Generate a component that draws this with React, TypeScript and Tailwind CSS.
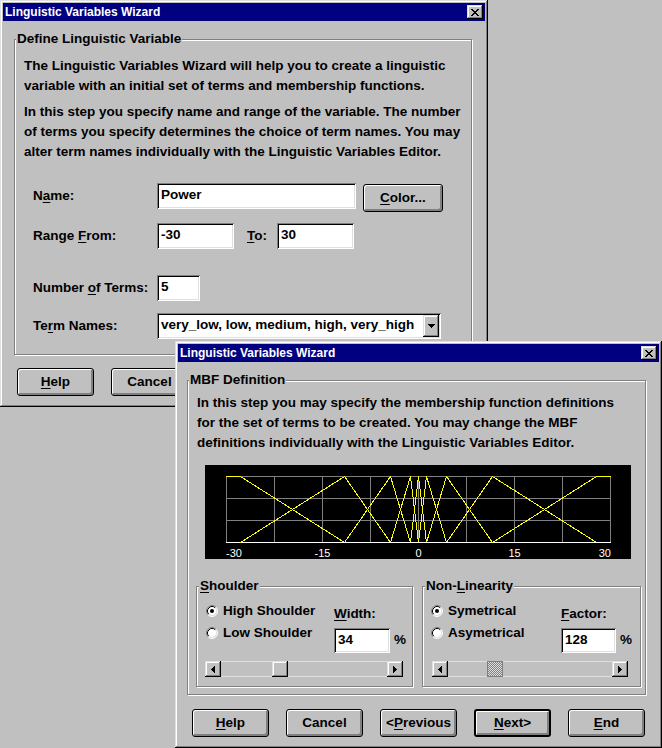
import React from "react";

const raised =
  "shadow-[inset_-1px_-1px_#000,inset_1px_1px_#dfdfdf,inset_-2px_-2px_#808080,inset_2px_2px_#fff]";
const sunken =
  "shadow-[inset_1px_1px_#808080,inset_-1px_-1px_#fff,inset_2px_2px_#000,inset_-2px_-2px_#dfdfdf]";

function U({ children }: { children: React.ReactNode }) {
  return <span className="underline decoration-1 underline-offset-[2px]">{children}</span>;
}

function XGlyph() {
  const rows = ["11000011", "01100110", "00111100", "00011000", "00111100", "01100110", "11000011"];
  return (
    <svg width="8" height="7" viewBox="0 0 8 7" shapeRendering="crispEdges">
      {rows.flatMap((r, y) =>
        r.split("").map((c, x) =>
          c === "1" ? <rect key={`${x}-${y}`} x={x} y={y} width="1" height="1" fill="#000" /> : null
        )
      )}
    </svg>
  );
}

function TitleBar() {
  return (
    <div className="h-[18px] shrink-0 bg-[#000080] flex items-center justify-between pl-[2px] pr-[2px]">
      <span className="text-white font-bold text-[12px] leading-none">Linguistic Variables Wizard</span>
      <div className={`w-[16px] h-[14px] bg-[#c0c0c0] flex items-center justify-center ${raised}`}>
        <XGlyph />
      </div>
    </div>
  );
}

function Window({ className, children }: { className: string; children: React.ReactNode }) {
  return (
    <div className={`absolute bg-[#c0c0c0] p-[3px] flex flex-col ${raised} ${className}`}>
      <TitleBar />
      {children}
    </div>
  );
}

function Group({
  label,
  className,
  labelClass,
  children,
}: {
  label: React.ReactNode;
  className: string;
  labelClass: string;
  children: React.ReactNode;
}) {
  return (
    <div
      className={`relative shrink-0 border border-[#808080] shadow-[1px_1px_0_#fff,inset_1px_1px_0_#fff] ${className}`}
    >
      <div className={`absolute -top-[9px] px-[1px] bg-[#c0c0c0] leading-[16px] ${labelClass}`}>{label}</div>
      {children}
    </div>
  );
}

function Btn({ children, def, className = "" }: { children: React.ReactNode; def?: boolean; className?: string }) {
  return (
    <div
      className={`shrink-0 h-[28px] flex items-center justify-center bg-[#c0c0c0] rounded-[3px] border-black ${
        def ? "border-2" : "border"
      } shadow-[inset_1px_1px_#fff,inset_-1px_-1px_#808080,inset_-2px_-2px_#808080] ${className}`}
    >
      <span className="whitespace-nowrap">{children}</span>
    </div>
  );
}

function Field({ children, className }: { children?: React.ReactNode; className: string }) {
  return (
    <div className={`shrink-0 bg-white flex items-center pl-[4px] pb-[1px] ${sunken} ${className}`}>
      <span>{children}</span>
    </div>
  );
}

function Label({ children }: { children: React.ReactNode }) {
  return (
    <div className="w-[124px] h-[26px] shrink-0 flex items-center">
      <span className="whitespace-nowrap">{children}</span>
    </div>
  );
}

function DownArrow() {
  return (
    <svg width="7" height="4" viewBox="0 0 7 4" shapeRendering="crispEdges">
      <path d="M0 0H7V1H6V2H5V3H4V4H3V3H2V2H1V1H0Z" fill="#000" />
    </svg>
  );
}

function SideArrow({ dir }: { dir: "left" | "right" }) {
  return (
    <svg width="4" height="7" viewBox="0 0 4 7" shapeRendering="crispEdges">
      {dir === "left" ? (
        <path d="M3 0H4V7H3V6H2V5H1V4H0V3H1V2H2V1H3Z" fill="#000" />
      ) : (
        <path d="M0 0H1V1H2V2H3V3H4V4H3V5H2V6H1V7H0Z" fill="#000" />
      )}
    </svg>
  );
}

function Scrollbar({ className, thumb, dither }: { className: string; thumb: number; dither?: boolean }) {
  return (
    <div className={`h-[16px] flex bg-[#c0c0c0] ${className}`}>
      <div className={`w-[16px] h-[16px] shrink-0 bg-[#c0c0c0] flex items-center justify-center ${raised}`}>
        <SideArrow dir="left" />
      </div>
      <div className="flex-1 flex border-y border-[#dfdfdf]">
        <div style={{ width: thumb - 16 }} className="shrink-0" />
        {dither ? (
          <div className="w-[16px] h-[16px] -mt-px shrink-0 border border-[#808080] bg-[repeating-conic-gradient(#808080_0%_25%,#dfdfdf_0%_50%)] bg-[length:2px_2px]" />
        ) : (
          <div className={`w-[16px] h-[16px] -mt-px shrink-0 bg-[#c0c0c0] ${raised}`} />
        )}
      </div>
      <div className={`w-[16px] h-[16px] shrink-0 bg-[#c0c0c0] flex items-center justify-center ${raised}`}>
        <SideArrow dir="right" />
      </div>
    </div>
  );
}

function Radio({ checked, label }: { checked?: boolean; label: string }) {
  return (
    <div className="h-[22px] flex items-center gap-[5px]">
      <svg width="12" height="12" viewBox="0 0 12 12" className="shrink-0">
        <circle cx="6" cy="6" r="5" fill="#fff" />
        <path d="M9.89 2.11A5.5 5.5 0 0 0 2.11 9.89" stroke="#808080" fill="none" />
        <path d="M2.11 9.89A5.5 5.5 0 0 0 9.89 2.11" stroke="#fff" fill="none" />
        <path d="M9.18 2.82A4.5 4.5 0 0 0 2.82 9.18" stroke="#000" fill="none" />
        <path d="M2.82 9.18A4.5 4.5 0 0 0 9.18 2.82" stroke="#dfdfdf" fill="none" />
        {checked && <circle cx="6" cy="6" r="2" fill="#000" />}
      </svg>
      <span className="leading-[16px] whitespace-nowrap">{label}</span>
    </div>
  );
}

function Chart() {
  const P = [35, 139, 185, 205, 213, 221, 241, 287, 391];
  const T = 11;
  const B = 77;
  const segs: [number, number, number, number][] = [];
  for (let i = 0; i < P.length - 1; i++) {
    segs.push([P[i], T, P[i + 1], B]);
    segs.push([P[i], B, P[i + 1], T]);
  }
  const vx = Array.from({ length: 9 }, (_, k) => 21 + 48 * k);
  return (
    <svg width="426" height="94" viewBox="0 0 426 94" className="block shrink-0 bg-black">
      {vx.map((x) => (
        <line key={`v${x}`} x1={x + 0.5} y1={T} x2={x + 0.5} y2={B} stroke="#808080" />
      ))}
      {[11, 33, 55].map((y) => (
        <line key={`h${y}`} x1={21} y1={y + 0.5} x2={406} y2={y + 0.5} stroke="#808080" />
      ))}
      <line x1={21} y1={77.5} x2={406} y2={77.5} stroke="#fff" />
      <g stroke="#ffff00" strokeWidth="1" shapeRendering="crispEdges">
        <line x1={21} y1={11.5} x2={35.5} y2={11.5} />
        <line x1={391} y1={11.5} x2={406} y2={11.5} />
        {segs.map(([a, b, c, d], i) => (
          <line key={i} x1={a + 0.5} y1={b + 0.5} x2={c + 0.5} y2={d + 0.5} />
        ))}
      </g>
      <g fill="#fff" fontSize="11" fontWeight="normal" fontFamily="'Liberation Sans', Arial, sans-serif">
        <text x={21} y={92} textAnchor="start">-30</text>
        <text x={117.5} y={92} textAnchor="middle">-15</text>
        <text x={213.5} y={92} textAnchor="middle">0</text>
        <text x={309.5} y={92} textAnchor="middle">15</text>
        <text x={406} y={92} textAnchor="end">30</text>
      </g>
    </svg>
  );
}

export default function App() {
  return (
    <div className="relative w-[662px] h-[748px] overflow-hidden bg-[#c0c0c0] font-['Liberation_Sans',Arial,sans-serif] text-black text-[13.5px] font-bold">
      <Window className="left-0 top-0 w-[488px] h-[407px]">
        <Group
          label="Define Linguistic Variable"
          labelClass="left-[1px]"
          className="ml-[11px] mt-[18px] w-[458px] h-[316px]"
        >
          <div className="pl-[9px] pt-[16px] leading-[20px] whitespace-nowrap">
            <p>
              The Linguistic Variables Wizard will help you to create a linguistic
              <br />
              variable with an initial set of terms and membership functions.
            </p>
            <p className="mt-[6px]">
              In this step you specify name and range of the variable. The number
              <br />
              of terms you specify determines the choice of term names. You may
              <br />
              alter term names individually with the Linguistic Variables Editor.
            </p>
          </div>
          <div className="pl-[18px] mt-[21px] flex flex-col">
            <div className="h-[40px] flex items-start">
              <Label>
                N<U>a</U>me:
              </Label>
              <Field className="w-[199px] h-[26px]">Power</Field>
              <Btn className="w-[80px] ml-[7px] mt-[1px]">
                <U>C</U>olor...
              </Btn>
            </div>
            <div className="h-[52px] flex items-start">
              <Label>
                Range <U>F</U>rom:
              </Label>
              <Field className="w-[77px] h-[26px]">-30</Field>
              <div className="ml-[13px] h-[26px] flex items-center">
                <span>
                  <U>T</U>o:
                </span>
              </div>
              <Field className="ml-[10px] w-[77px] h-[26px]">30</Field>
            </div>
            <div className="h-[38px] flex items-start">
              <Label>
                Number <U>o</U>f Terms:
              </Label>
              <Field className="w-[43px] h-[26px]">5</Field>
            </div>
            <div className="h-[26px] flex items-start">
              <Label>
                Te<U>r</U>m Names:
              </Label>
              <div className={`w-[284px] h-[26px] shrink-0 bg-white flex items-center p-[2px] ${sunken}`}>
                <span className="flex-1 pl-[2px] pb-[1px] whitespace-nowrap">very_low, low, medium, high, very_high</span>
                <div className={`w-[16px] h-full shrink-0 bg-[#c0c0c0] flex items-center justify-center ${raised}`}>
                  <DownArrow />
                </div>
              </div>
            </div>
          </div>
        </Group>
        <div className="flex gap-[17px] ml-[14px] mt-[13px]">
          <Btn className="w-[77px]">
            <U>H</U>elp
          </Btn>
          <Btn className="w-[77px]">Cancel</Btn>
        </div>
      </Window>

      <Window className="left-[175px] top-[341px] w-[487px] h-[407px]">
        <Group label="MBF Definition" labelClass="left-[1px]" className="ml-[9px] mt-[18px] w-[459px] h-[315px]">
          <div className="pl-[9px] pt-[12px] leading-[20px] whitespace-nowrap">
            <p>
              In this step you may specify the membership function definitions
              <br />
              for the set of terms to be created. You may change the MBF
              <br />
              definitions individually with the Linguistic Variables Editor.
            </p>
          </div>
          <div className="ml-[17px] mt-[12px]">
            <Chart />
          </div>
          <div className="flex ml-[8px] mt-[27px] gap-[9px]">
            <Group
              label={
                <>
                  <U>S</U>houlder
                </>
              }
              labelClass="left-[2px]"
              className="w-[217px] h-[101px]"
            >
              <div className="flex pl-[9px] h-[74px]">
                <div className="w-[128px] shrink-0 pt-[13px] flex flex-col">
                  <Radio checked label="High Shoulder" />
                  <Radio label="Low Shoulder" />
                </div>
                <div className="pt-[19px] flex flex-col">
                  <div className="leading-[16px]">
                    <U>W</U>idth:
                  </div>
                  <div className="mt-[6px] flex items-center">
                    <Field className="w-[56px] h-[25px]">34</Field>
                    <span className="ml-[4px]">%</span>
                  </div>
                </div>
              </div>
              <Scrollbar className="ml-[8px] w-[198px]" thumb={67} />
            </Group>
            <Group
              label={
                <>
                  Non-<U>L</U>inearity
                </>
              }
              labelClass="left-[2px]"
              className="w-[219px] h-[101px]"
            >
              <div className="flex pl-[8px] h-[74px]">
                <div className="w-[130px] shrink-0 pt-[13px] flex flex-col">
                  <Radio checked label="Symetrical" />
                  <Radio label="Asymetrical" />
                </div>
                <div className="pt-[19px] flex flex-col">
                  <div className="leading-[16px]">
                    <U>F</U>actor:
                  </div>
                  <div className="mt-[6px] flex items-center">
                    <Field className="w-[55px] h-[25px]">128</Field>
                    <span className="ml-[4px]">%</span>
                  </div>
                </div>
              </div>
              <Scrollbar className="ml-[9px] w-[196px]" thumb={55} dither />
            </Group>
          </div>
        </Group>
        <div className="flex gap-[17px] ml-[14px] mt-[14px]">
          <Btn className="w-[77px]">
            <U>H</U>elp
          </Btn>
          <Btn className="w-[77px]">Cancel</Btn>
          <Btn className="w-[77px]">
            &lt;<U>P</U>revious
          </Btn>
          <Btn className="w-[77px]" def>
            <U>N</U>ext&gt;
          </Btn>
          <Btn className="w-[77px]">
            <U>E</U>nd
          </Btn>
        </div>
      </Window>
    </div>
  );
}
